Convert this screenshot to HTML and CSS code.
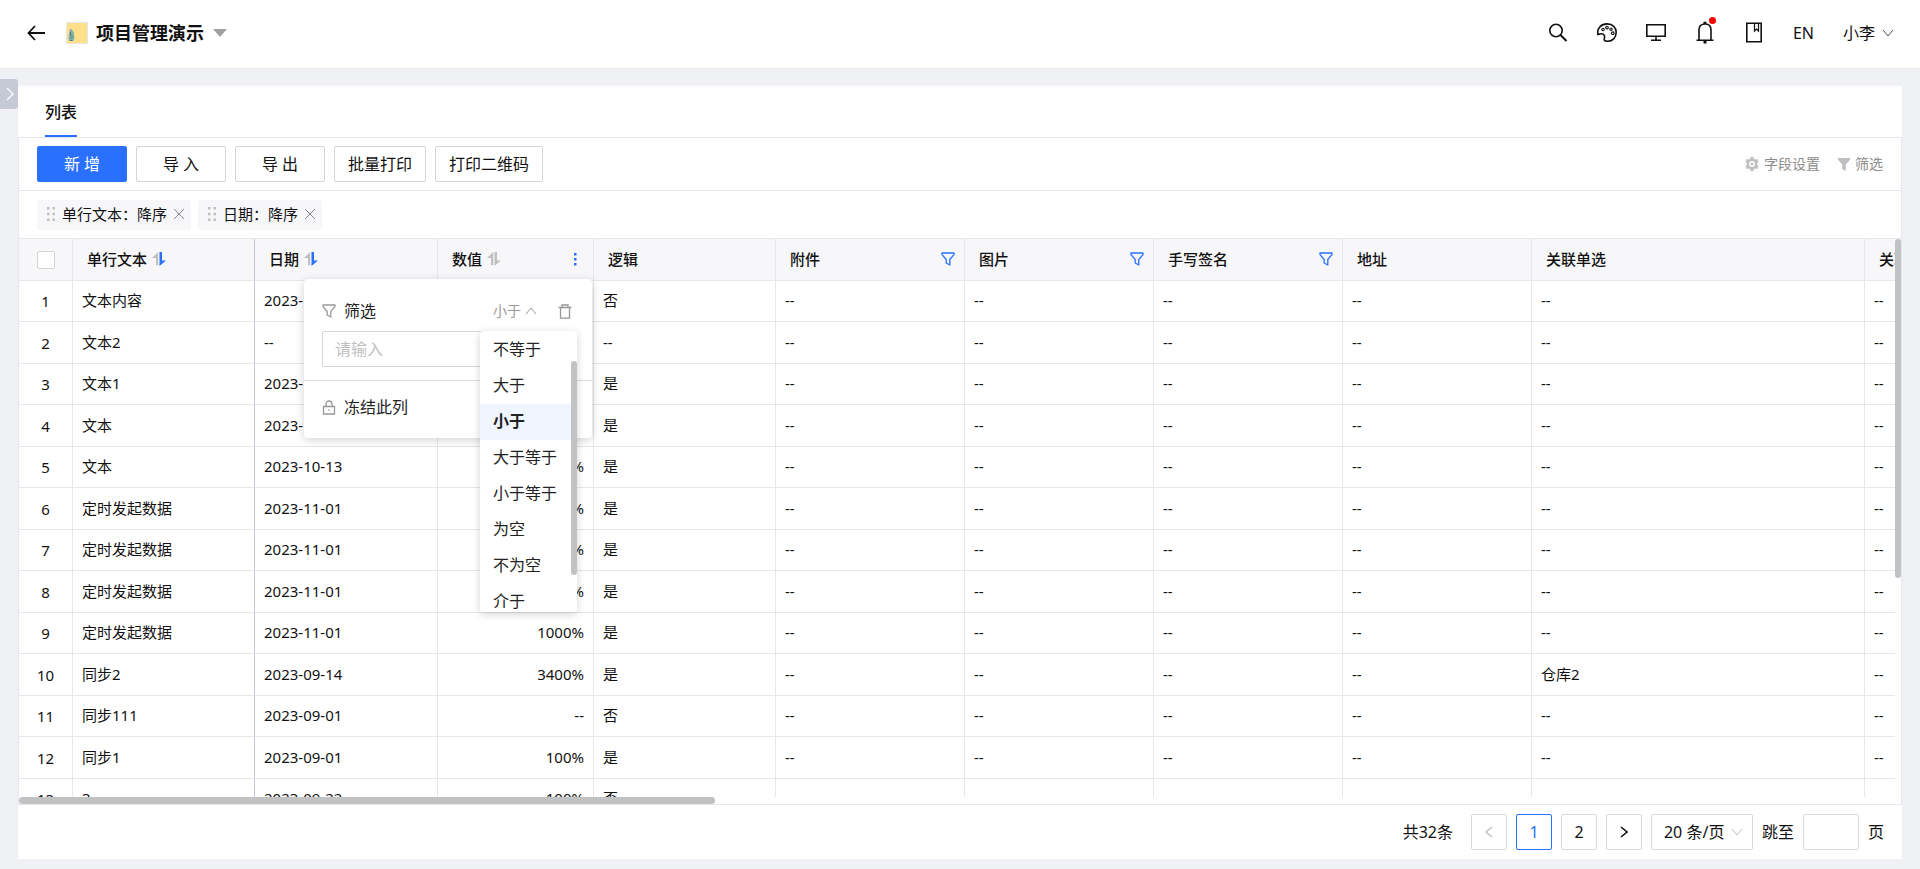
FILE: index.html
```
<!DOCTYPE html>
<html lang="zh-CN">
<head>
  <meta charset="UTF-8" />
  <meta name="viewport" content="width=device-width, initial-scale=1.0"/>
  <title>项目管理演示</title>
  <link rel="stylesheet" href="styles.css">
</head>
<body>

  <!-- Icone condivise -->
  <svg class="sprite" aria-hidden="true">
    <symbol id="i-down" viewBox="0 0 12 12"><path d="M1 3l5 6 5-6" fill="none" stroke="currentColor"/></symbol>
    <symbol id="i-up" viewBox="0 0 12 12"><path d="M1 9l5-6 5 6" fill="none" stroke="currentColor"/></symbol>
    <symbol id="i-close" viewBox="0 0 10 10"><path d="M0 0l10 10M10 0L0 10" fill="none" stroke="currentColor"/></symbol>
    <symbol id="i-drag" viewBox="0 0 8 14"><path d="M0 0h2.500v2.500H0zM5.500 0H8v2.500H5.500zM0 5.750h2.500v2.500H0zM5.500 5.750H8v2.500H5.500zM0 11.500h2.500V14H0zM5.500 11.500H8V14H5.500z" fill="currentColor"/></symbol>
    <symbol id="i-filter" viewBox="0 0 14 14"><path d="M1 1h12v1.600L8.800 7.500V13L5.200 11V7.500L1 2.600z" fill="none" stroke="currentColor" stroke-width="1.300" stroke-linejoin="round"/></symbol>
    <symbol id="i-sort" viewBox="0 0 14 14">
      <path class="sort-up" d="M6.200 0v13H4V6H0z"/>
      <path class="sort-down" d="M7.500 0v14L14 8.500H10V0z"/>
    </symbol>
  </svg>

  <header class="topbar">
    <button class="icon-btn back" aria-label="返回">
      <svg width="18" height="16" viewBox="0 0 18 16"><path d="M8 1L1.500 8 8 15M1.500 8H18" fill="none" stroke="currentColor" stroke-width="1.800"/></svg>
    </button>
    <svg class="app-icon" width="22" height="22" viewBox="0 0 22 22">
      <rect width="22" height="22" fill="#e6e6ea"/>
      <rect x="1" y="1" width="20" height="20" fill="#ffe08a"/>
      <path d="M4 7.500c1-.800 2.200-.500 2.500 1 1.700 1.500 2.300 5 1.700 9.500-2 1.500-4.700 1-5.700-.500 0-4 .500-7 1.500-10z" fill="#84b3ae"/>
      <path d="M4.500 9.500v3.500l2 2-2 2M3.500 18.500h3" fill="none" stroke="#47807e"/>
    </svg>
    <h1 class="app-title">项目管理演示</h1>
    <button class="icon-btn" aria-label="切换应用">
      <svg width="14" height="8" viewBox="0 0 14 8"><path d="M0 0h14L7 8z" fill="#a0a0a0"/></svg>
    </button>

    <nav class="top-tools">
      <button class="icon-btn" aria-label="搜索">
        <svg width="20" height="20" viewBox="0 0 20 20" class="line"><circle cx="8" cy="7.500" r="6.200"/><path d="M12.500 12l6 6" stroke-width="2"/></svg>
      </button>
      <button class="icon-btn" aria-label="主题">
        <svg width="20" height="20" viewBox="0 0 20 20" class="line">
          <path d="M.900 11.500C-.300 5.500 4 .900 10.200.900c5.500 0 9 3.600 9 8.400 0 5.500-4 8.900-8.200 8.900-2 0-3.500-.200-3.800-1.500-.100-1.200.900-2.800.100-4.400-.800-1.500-2.800-2-6.400-.800z"/>
          <g stroke-width="1.100"><circle cx="6" cy="6.400" r="1.200"/><circle cx="10" cy="4.600" r="1.300"/><circle cx="14" cy="6.200" r="1.200"/><circle cx="15.800" cy="10.200" r="1.300"/></g>
        </svg>
      </button>
      <button class="icon-btn" aria-label="桌面">
        <svg width="20" height="20" viewBox="0 0 20 20" class="line"><path d="M.800 1.800h18.400v11.400H.800zM10 13v4M5 17.200h10"/></svg>
      </button>
      <button class="icon-btn bell" aria-label="消息">
        <svg width="20" height="24" viewBox="0 0 20 24" class="line"><path d="M4 19V9c0-4 2.500-6 6-6s6 2 6 6v10M1.500 19.200h17"/><path d="M10 .800V3M10 19.500v3" stroke-width="3"/></svg>
        <span class="dot"></span>
      </button>
      <button class="icon-btn" aria-label="手册">
        <svg width="20" height="22" viewBox="0 0 20 22" class="line"><path d="M2.800 1.200h14.400v18.600H2.800z"/><path d="M10.500 1.500v7.500l2-2 2 2V1.500" stroke-width="1.200"/></svg>
      </button>
      <button class="text-btn">EN</button>
      <button class="text-btn user">小李 <svg width="12" height="12"><use href="#i-down"/></svg></button>
    </nav>
  </header>

  <button class="side-toggle" aria-label="展开菜单">
    <svg width="8" height="14" viewBox="0 0 8 14"><path d="M1 1l6 6-6 6" fill="none" stroke="#fff" stroke-width="1.300"/></svg>
  </button>

  <main class="panel">
    <div class="tabs">
      <a class="tab active" href="#list">列表</a>
    </div>

    <section class="list" id="list">
      <div class="toolbar">
        <button class="btn btn-primary">新 增</button>
        <button class="btn">导 入</button>
        <button class="btn">导 出</button>
        <button class="btn">批量打印</button>
        <button class="btn">打印二维码</button>
        <div class="toolbar-right">
          <button class="link-btn">
            <svg width="14" height="14" viewBox="0 0 14 14"><path d="M5.500 0h3l.4 1.900 1.300.7 1.900-.7L13.600 4.500 12.200 6v2l1.400 1.500-1.500 2.600-1.900-.7-1.300.7L8.500 14h-3l-.4-1.900-1.300-.7-1.900.7L.4 9.500 1.800 8V6L.4 4.500l1.500-2.600 1.900.7 1.300-.7z" fill="#bfbfbf"/><circle cx="7" cy="7" r="2.200" fill="#bfbfbf" stroke="#fff" stroke-width="1.500"/></svg>
            字段设置
          </button>
          <button class="link-btn">
            <svg width="12" height="13" viewBox="0 0 12 13"><path d="M0 0h12v1.800L7.800 6.500V13L4.200 11V6.500L0 1.800z" fill="#bfbfbf"/></svg>
            筛选
          </button>
        </div>
      </div>

      <div class="sort-tags">
        <span class="sort-tag">
          <svg class="drag" width="8" height="14"><use href="#i-drag"/></svg>
          <span>单行文本：降序</span>
          <button class="icon-btn" aria-label="移除单行文本"><svg width="10" height="10"><use href="#i-close"/></svg></button>
        </span>
        <span class="sort-tag">
          <svg class="drag" width="8" height="14"><use href="#i-drag"/></svg>
          <span>日期：降序</span>
          <button class="icon-btn" aria-label="移除日期"><svg width="10" height="10"><use href="#i-close"/></svg></button>
        </span>
      </div>

      <div class="table-wrap">
        <div class="table-scroll">
          <table class="grid">
            <colgroup>
              <col class="c-index"><col class="c-text"><col class="c-date"><col class="c-num"><col class="c-text">
              <col class="c-file"><col class="c-file"><col class="c-file"><col class="c-file"><col class="c-wide"><col class="c-file">
            </colgroup>
            <thead>
              <tr>
                <th class="center"><input type="checkbox" class="check" aria-label="全选"></th>
                <th class="frozen"><div class="th-in">单行文本 <svg class="sort desc" width="14" height="14"><use href="#i-sort"/></svg></div></th>
                <th><div class="th-in">日期 <svg class="sort desc" width="14" height="14"><use href="#i-sort"/></svg></div></th>
                <th class="has-menu">
                  <div class="th-in">数值 <svg class="sort" width="14" height="14"><use href="#i-sort"/></svg>
                    <button class="icon-btn th-action" aria-label="列菜单"><svg width="14" height="14" viewBox="0 0 14 14"><path d="M4 1h2.500v2.500H4zM4 6h2.500v2.500H4zM4 11h2.500v2.500H4z" fill="currentColor"/></svg></button>
                  </div>

                  <!-- Menu della colonna -->
                  <div class="col-menu">
                    <div class="filter-box">
                      <div class="filter-head">
                        <svg class="muted" width="14" height="14"><use href="#i-filter"/></svg>
                        <label for="filter-value">筛选</label>
                        <div class="op">
                          <select class="op-select" aria-label="条件">
                            <option>小于</option>
                            <option>大于</option>
                          </select>
                          <svg width="12" height="12"><use href="#i-up"/></svg>
                        </div>
                        <button class="icon-btn muted" aria-label="清除"><svg width="14" height="15" viewBox="0 0 14 15"><path d="M.500 3.500h13M4 3.500V1h6v2.500M2.500 3.500v10.700h9V3.500" fill="none" stroke="currentColor" stroke-width="1.300"/></svg></button>
                      </div>
                      <input type="text" id="filter-value" class="filter-input" placeholder="请输入">
                      <div class="op-list">
                        <ul role="listbox" aria-label="条件">
                          <li role="option">不等于</li>
                          <li role="option">大于</li>
                          <li role="option" aria-selected="true" class="selected">小于</li>
                          <li role="option">大于等于</li>
                          <li role="option">小于等于</li>
                          <li role="option">为空</li>
                          <li role="option">不为空</li>
                          <li role="option">介于</li>
                        </ul>
                        <span class="op-thumb"></span>
                      </div>
                    </div>
                    <button class="freeze">
                      <svg class="muted" width="14" height="15" viewBox="0 0 14 15"><path d="M1.500 6.500h11v7.500h-11zM4 6.500V4a3 3 0 0 1 6 0v2.500M7 9.500v1.500" fill="none" stroke="currentColor" stroke-width="1.300"/></svg>
                      冻结此列
                    </button>
                  </div>
                </th>
                <th><div class="th-in">逻辑</div></th>
                <th><div class="th-in">附件 <button class="icon-btn th-action" aria-label="筛选附件"><svg width="14" height="14"><use href="#i-filter"/></svg></button></div></th>
                <th><div class="th-in">图片 <button class="icon-btn th-action" aria-label="筛选图片"><svg width="14" height="14"><use href="#i-filter"/></svg></button></div></th>
                <th><div class="th-in">手写签名 <button class="icon-btn th-action" aria-label="筛选手写签名"><svg width="14" height="14"><use href="#i-filter"/></svg></button></div></th>
                <th><div class="th-in">地址</div></th>
                <th><div class="th-in">关联单选</div></th>
                <th><div class="th-in">关联多选</div></th>
              </tr>
            </thead>
            <tbody id="rows"></tbody>
          </table>
        </div>
        <span class="thumb-y"></span>
        <span class="thumb-x"></span>
      </div>
    </section>

    <footer class="pager">
      <span class="total">共32条</span>
      <button class="page" disabled aria-label="上一页"><svg width="8" height="12" viewBox="0 0 8 12"><path d="M7 1L1 6l6 5" fill="none" stroke="currentColor" stroke-width="1.400"/></svg></button>
      <button class="page current">1</button>
      <button class="page">2</button>
      <button class="page" aria-label="下一页"><svg width="8" height="12" viewBox="0 0 8 12"><path d="M1 1l6 5-6 5" fill="none" stroke="currentColor" stroke-width="1.600"/></svg></button>
      <div class="size">
        <select class="size-select" aria-label="每页条数">
          <option>20 条/页</option>
          <option>50 条/页</option>
        </select>
        <svg width="12" height="12"><use href="#i-down"/></svg>
      </div>
      <label for="jump">跳至</label>
      <input type="text" id="jump" class="jump">
      <span>页</span>
    </footer>
  </main>

  <script src="script.js"></script>
</body>
</html>
```

FILE: styles.css
```
* {
  box-sizing: border-box;
}
body {
  margin: 0;
  height: 100vh;
  display: flex;
  flex-direction: column;
  position: relative;
  overflow: hidden;
  background: #f0f1f5;
  color: #111;
  font-family: "Noto Sans", "Noto Sans CJK SC", sans-serif;
  font-size: 16px;
  line-height: 22px;
}
button, input, select {
  font: inherit;
  color: inherit;
  margin: 0;
}
button {
  cursor: pointer;
}
svg {
  display: block;
  flex: none;
}
.sprite {
  position: absolute;
  width: 0;
  height: 0;
}
.line {
  fill: none;
  stroke: currentColor;
  stroke-width: 1.6;
}
.icon-btn, .text-btn, .link-btn {
  display: flex;
  align-items: center;
  padding: 0;
  border: none;
  background: none;
}

/* header */
.topbar {
  flex: none;
  display: flex;
  align-items: center;
  height: 69px;
  padding: 0 26px 2px 27px;
  background: #fff;
  border-bottom: 1px solid #e8e8e8;
}
.app-icon {
  margin: 0 8px 0 21px;
}
.app-title {
  margin: 0 9px 0 0;
  font-size: 18px;
  line-height: 26px;
  font-weight: 700;
}
.top-tools {
  display: flex;
  align-items: center;
  gap: 29px;
  margin-left: auto;
}
.bell {
  position: relative;
}
.dot {
  position: absolute;
  top: -4px;
  right: -1px;
  width: 7px;
  height: 7px;
  border-radius: 50%;
  background: #f00;
}
.user {
  gap: 7px;
}
.user svg {
  color: #555;
}
.side-toggle {
  position: absolute;
  left: 0;
  top: 79px;
  display: flex;
  align-items: center;
  justify-content: flex-end;
  width: 18px;
  height: 30px;
  padding: 0 4px 0 0;
  border: none;
  border-radius: 0 3px 3px 0;
  background: #c5c9d6;
}

/* contenuto */
.panel {
  flex: 1;
  min-height: 0;
  display: flex;
  flex-direction: column;
  margin: 17px 18px 10px;
  background: #fff;
}
.tabs {
  flex: none;
  display: flex;
  height: 51px;
  padding: 0 27px;
}
.tab {
  display: flex;
  align-items: center;
  padding-top: 2px;
  border-bottom: 2px solid #2970ff;
  color: #111;
  font-weight: 500;
  text-decoration: none;
}
.list {
  flex: 1;
  min-height: 0;
  display: flex;
  flex-direction: column;
  border: 1px solid #e6e7eb;
}
.toolbar {
  flex: none;
  display: flex;
  align-items: center;
  gap: 9px;
  padding: 8px 18px;
  border-bottom: 1px solid #e6e7eb;
}
.btn {
  min-width: 90px;
  height: 36px;
  padding: 0 13px;
  border: 1px solid #d5d5d5;
  border-radius: 2px;
  background: #fff;
}
.btn-primary {
  border-color: #2970ff;
  background: #2970ff;
  color: #fff;
}
.toolbar-right {
  display: flex;
  gap: 18px;
  margin-left: auto;
}
.link-btn {
  gap: 5px;
  font-size: 14px;
  color: #8c8c8c;
}
.sort-tags {
  flex: none;
  display: flex;
  align-items: center;
  gap: 7px;
  height: 47px;
  padding: 0 18px;
}
.sort-tag {
  display: flex;
  align-items: center;
  gap: 7px;
  height: 30px;
  padding: 0 7px 2px 10px;
  border-radius: 3px;
  background: #f7f7f9;
  font-size: 15px;
}
.sort-tag .drag {
  color: #bfbfbf;
}
.sort-tag .icon-btn {
  color: #888;
}

/* tabella */
.table-wrap {
  flex: 1;
  min-height: 0;
  position: relative;
  padding: 0 6px 7px 0;
  border-top: 1px solid #e6e7eb;
}
.table-scroll {
  height: 100%;
  overflow: hidden;
}
.grid {
  table-layout: fixed;
  width: 2035px;
  border-collapse: separate;
  border-spacing: 0;
  font-size: 15px;
}
.c-index { width: 54px; }
.c-text { width: 182px; }
.c-date { width: 183px; }
.c-num { width: 156px; }
.c-file { width: 189px; }
.c-wide { width: 333px; }
.grid th, .grid td {
  padding: 0 9px 2px;
  border-right: 1px solid #e6e7eb;
  border-bottom: 1px solid #e6e7eb;
  text-align: left;
  white-space: nowrap;
}
.grid th {
  height: 42px;
  padding: 0 9px 2px 14px;
  background: #f7f7f9;
  font-weight: 500;
}
.grid td {
  height: 41px;
}
.grid tr:nth-child(even) td {
  height: 42px;
}
.grid .frozen {
  border-right-color: #c3c9d9;
}
.grid .center {
  padding: 0;
  text-align: center;
}
.grid .num {
  text-align: right;
}
.th-in {
  display: flex;
  align-items: center;
  gap: 5px;
}
.th-action {
  margin-left: auto;
  color: #2970ff;
}
.check {
  appearance: none;
  display: block;
  width: 18px;
  height: 18px;
  margin: 0 auto;
  border: 1px solid #d5d5d5;
  border-radius: 2px;
  background: #fff;
}
.sort {
  --down: #bfbfbf;
}
.sort.desc {
  --down: #2970ff;
}
.sort-up {
  fill: #bfbfbf;
}
.sort-down {
  fill: var(--down);
}
.thumb-y, .thumb-x, .op-thumb {
  position: absolute;
  border-radius: 4px;
  background: #c1c2c4;
}
.thumb-y {
  top: 0;
  right: 0;
  width: 6px;
  height: 60%;
}
.thumb-x {
  left: 0;
  bottom: 0;
  width: 37%;
  height: 7px;
}

/* menu colonna */
.has-menu {
  position: relative;
}
.col-menu {
  position: absolute;
  z-index: 2;
  top: 40px;
  right: 1px;
  width: 288px;
  border-radius: 4px;
  background: #fff;
  box-shadow: 0 2px 10px rgba(0, 0, 0, 0.18);
  font-size: 16px;
  font-weight: 400;
  color: #222;
}
.filter-box {
  position: relative;
  padding: 21px 18px 13px;
  border-bottom: 1px solid #ddd;
}
.filter-head {
  display: flex;
  align-items: center;
  gap: 8px;
  height: 22px;
  margin-bottom: 9px;
  padding-right: 2px;
}
.muted {
  color: #999;
}
.op {
  display: flex;
  align-items: center;
  gap: 4px;
  margin: 0 13px 0 auto;
  color: #999;
  font-size: 14px;
}
.op-select, .size-select {
  appearance: none;
  padding: 0;
  border: none;
  background: none;
}
.op-select {
  width: 28px;
}
.filter-input {
  display: block;
  width: 100%;
  height: 36px;
  padding: 0 12px;
  border: 1px solid #d5d5d5;
  border-radius: 2px;
}
.filter-input::placeholder {
  color: #bfbfbf;
}
.op-list {
  position: absolute;
  top: 52px;
  right: 15px;
  width: 97px;
  height: 281px;
  overflow: hidden;
  border-radius: 3px;
  background: #fff;
  box-shadow: 0 2px 8px rgba(0, 0, 0, 0.18);
}
.op-list ul {
  margin: 1px 0 0;
  padding: 0;
  list-style: none;
}
.op-list li {
  padding: 6px 13px 8px;
}
.op-list .selected {
  background: #eff6ff;
  font-weight: 700;
}
.op-thumb {
  top: 30px;
  right: 0;
  width: 6px;
  height: 214px;
}
.freeze {
  display: flex;
  align-items: center;
  gap: 8px;
  width: 100%;
  height: 57px;
  padding: 0 18px 5px;
  border: none;
  background: none;
}

/* paginazione */
.pager {
  flex: none;
  display: flex;
  align-items: center;
  justify-content: flex-end;
  gap: 9px;
  height: 54px;
  padding: 0 18px;
}
.total {
  margin-right: 9px;
}
.page {
  display: flex;
  align-items: center;
  justify-content: center;
  width: 36px;
  height: 36px;
  padding: 0;
  border: 1px solid #d9d9d9;
  border-radius: 2px;
  background: #fff;
}
.page.current {
  border-color: #2970ff;
  color: #2970ff;
}
.page:disabled {
  color: #bfbfbf;
}
.size {
  display: flex;
  align-items: center;
  justify-content: space-between;
  width: 102px;
  height: 36px;
  padding: 0 9px 0 12px;
  border: 1px solid #d9d9d9;
  border-radius: 2px;
}
.size svg {
  color: #bfbfbf;
}
.jump {
  width: 56px;
  height: 36px;
  border: 1px solid #d9d9d9;
  border-radius: 2px;
}
```

FILE: script.js
```
// testo, data, numero, logico, relazione
const rows = [
  ['文本内容', '2023-11-09', '1000%', '否'],
  ['文本2', '--', '--', '--'],
  ['文本1', '2023-10-20', '100%', '是'],
  ['文本', '2023-10-13', '100%', '是'],
  ['文本', '2023-10-13', '100%', '是'],
  ['定时发起数据', '2023-11-01', '1000%', '是'],
  ['定时发起数据', '2023-11-01', '1000%', '是'],
  ['定时发起数据', '2023-11-01', '1000%', '是'],
  ['定时发起数据', '2023-11-01', '1000%', '是'],
  ['同步2', '2023-09-14', '3400%', '是', '仓库2'],
  ['同步111', '2023-09-01', '--', '否'],
  ['同步1', '2023-09-01', '100%', '是'],
  ['3', '2023-09-22', '100%', '否', '']
];

document.getElementById('rows').innerHTML = rows.map((row, i) => {
  const [text, date, num, bool, link = '--'] = row;
  const empty = i === 12 ? '' : '--';
  return `
    <tr>
      <td class="center">${i + 1}</td>
      <td class="frozen">${text}</td>
      <td>${date}</td>
      <td class="num">${num}</td>
      <td>${bool}</td>
      <td>${empty}</td>
      <td>${empty}</td>
      <td>${empty}</td>
      <td>${empty}</td>
      <td>${link}</td>
      <td>${empty}</td>
    </tr>
  `;
}).join('');
```
